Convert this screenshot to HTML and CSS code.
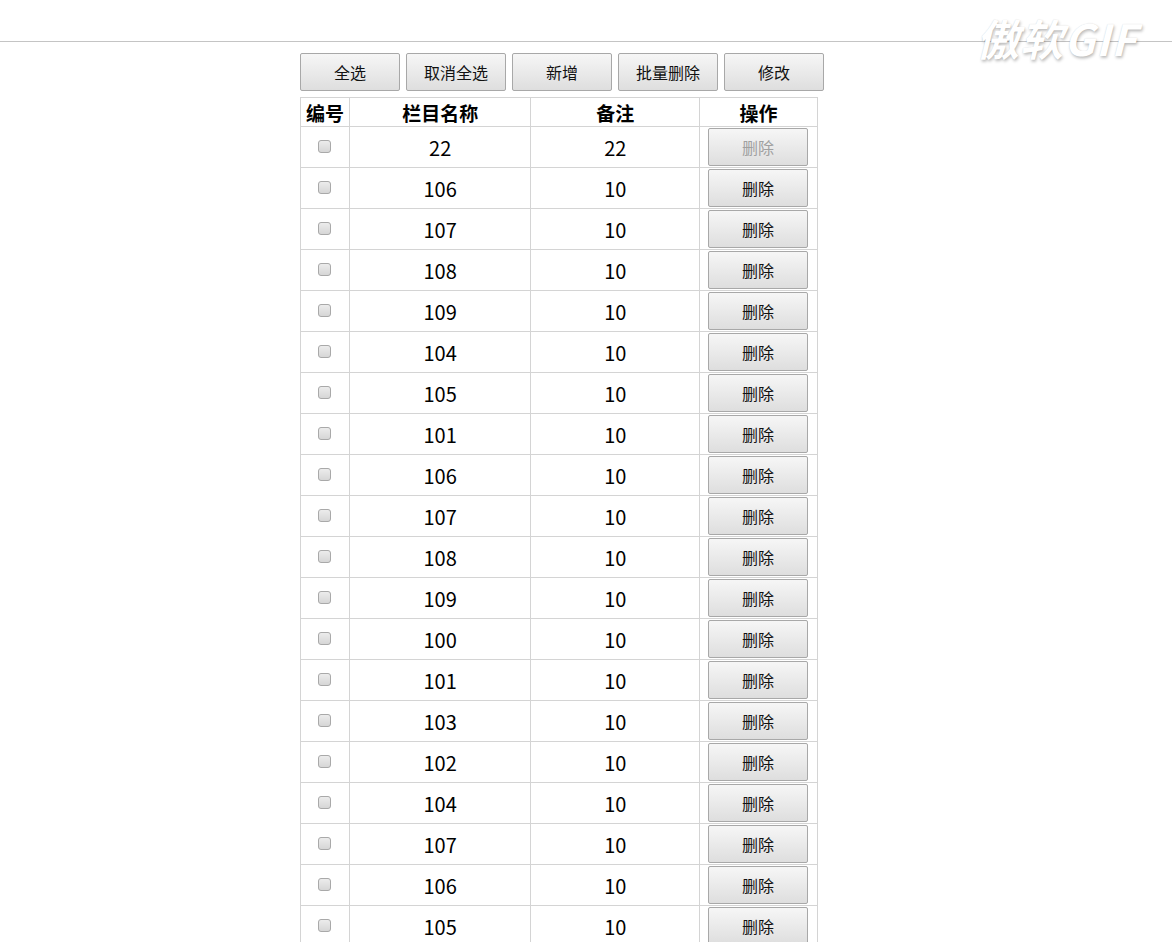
FILE: index.html
```html
<!DOCTYPE html>
<html lang="zh-CN">

<head>
  <meta charset="UTF-8" />
  <meta name="viewport" content="width=device-width, initial-scale=1.0" />
  <title>栏目管理</title>
  <link rel="stylesheet" href="styles.css">
</head>

<body>
  <div class="topBar"></div>
  <div class="watermark">傲软GIF</div>
  <div class="container">
    <div class="toolBar">
      <button class="btn">全选</button>
      <button class="btn">取消全选</button>
      <button class="btn">新增</button>
      <button class="btn">批量删除</button>
      <button class="btn">修改</button>
    </div>
    <table class="list">
      <thead>
        <tr>
          <th class="colId">编号</th>
          <th class="colName">栏目名称</th>
          <th class="colNote">备注</th>
          <th class="colOp">操作</th>
        </tr>
      </thead>
      <tbody id="listBody"></tbody>
    </table>
  </div>

  <script>
    // table data
    const rows = [
      ["22", "22"], ["106", "10"], ["107", "10"], ["108", "10"], ["109", "10"],
      ["104", "10"], ["105", "10"], ["101", "10"], ["106", "10"], ["107", "10"],
      ["108", "10"], ["109", "10"], ["100", "10"], ["101", "10"], ["103", "10"],
      ["102", "10"], ["104", "10"], ["107", "10"], ["106", "10"], ["105", "10"]
    ];
    const listBody = document.querySelector("#listBody");
    rows.forEach(function (r, i) {
      const tr = document.createElement("tr");
      tr.innerHTML =
        '<td><input type="checkbox" class="chk"></td>' +
        "<td>" + r[0] + "</td>" +
        "<td>" + r[1] + "</td>" +
        '<td><button class="btn delBtn"' + (i === 0 ? " disabled" : "") + ">删除</button></td>";
      listBody.appendChild(tr);
    });
  </script>
</body>

</html>
```
FILE: styles.css
```css
* {
  box-sizing: border-box;
}

body {
  margin: 0;
  background: #ffffff;
  font-family: "Noto Sans CJK SC", "Noto Sans", sans-serif;
  color: #000;
  overflow: hidden;
}

.topBar {
  height: 42px;
  border-bottom: 1px solid #c4c4c4;
}

.watermark {
  position: absolute;
  top: 6px;
  left: 976px;
  font-size: 43px;
  font-style: italic;
  font-weight: bold;
  color: #ffffff;
  letter-spacing: 1px;
  text-shadow: 1px 2px 3px rgba(0, 0, 0, 0.25), 0 0 1px rgba(0, 0, 0, 0.15);
}

.container {
  width: 572px;
  margin: 11px auto 0;
}

.toolBar {
  display: flex;
  gap: 6px;
}

.btn {
  width: 100px;
  height: 38px;
  border: 1px solid #a8a8a8;
  border-radius: 2px;
  background: linear-gradient(#f6f6f6, #dedede);
  font-family: "Noto Sans CJK SC", sans-serif;
  font-size: 16px;
  color: #111;
  padding: 0;
}

.btn:disabled {
  color: #a0a0a0;
}

.list {
  margin-top: 6px;
  width: 518px;
  border-collapse: collapse;
  border: 1px solid #d4d4d4;
}

.list th,
.list td {
  border: 1px solid #d4d4d4;
  text-align: center;
  padding: 0;
}

.list th {
  height: 29px;
  font-size: 19px;
  font-weight: bold;
  line-height: 1;
  vertical-align: middle;
}

.list td {
  height: 41px;
  font-size: 20px;
}

.colId {
  width: 49px;
}

.colName {
  width: 182px;
}

.colNote {
  width: 169px;
}

.colOp {
  width: 118px;
}

.chk {
  appearance: none;
  width: 13px;
  height: 13px;
  margin: 0 0 8px;
  border: 1px solid #a9a9a9;
  border-radius: 3px;
  background: linear-gradient(#ececec, #d6d6d6);
  vertical-align: middle;
}

.delBtn {
  display: block;
  margin: 0 auto 0 8px;
}
```
